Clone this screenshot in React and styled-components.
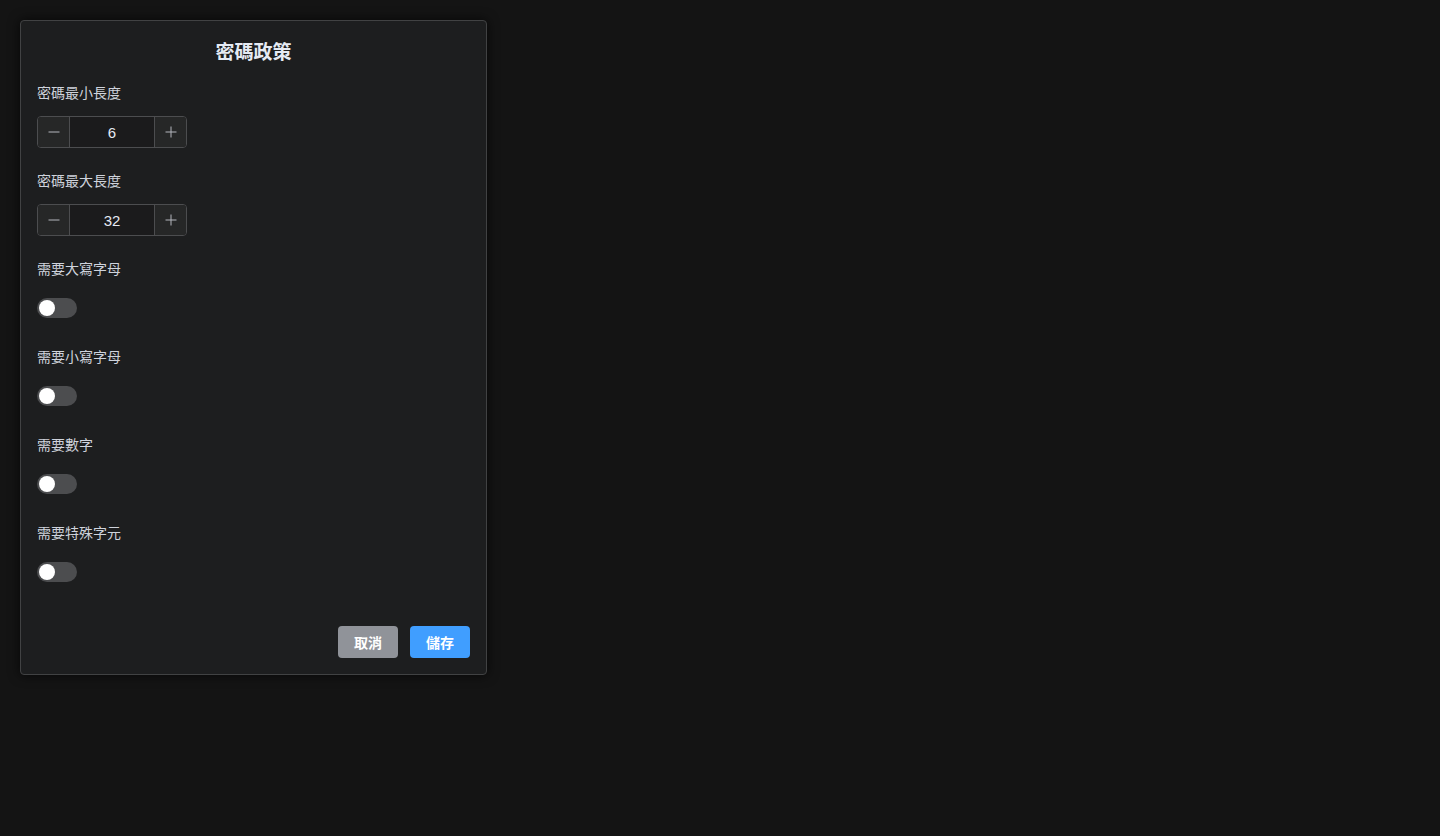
import { useState } from "react";
import styled, { createGlobalStyle } from "styled-components";

const GlobalStyle = createGlobalStyle`
  html, body {
    margin: 0;
    padding: 0;
    background: #141414;
    font-family: "Liberation Sans", "Noto Sans CJK TC", sans-serif;
  }
`;

const Page = styled.div`
  min-height: 100vh;
  padding: 20px;
  box-sizing: border-box;
`;

const Dialog = styled.div`
  width: 467px;
  box-sizing: border-box;
  background: #1d1e1f;
  border: 1px solid #414243;
  border-radius: 4px;
  box-shadow: 0 0 12px rgba(0, 0, 0, 0.72);
  padding: 17px 16px 16px;
`;

const Title = styled.div`
  height: 30px;
  line-height: 30px;
  text-align: center;
  font-size: 19px;
  font-weight: 700;
  color: #e5eaf3;
  margin-bottom: 14px;
`;

const FormItem = styled.div`
  margin-bottom: 22px;
`;

const Label = styled.div`
  font-size: 14px;
  line-height: 22px;
  color: #cfd3dc;
  margin-bottom: 12px;
`;

const Content = styled.div`
  height: 32px;
  display: flex;
  align-items: center;
`;

const Stepper = styled.div`
  width: 150px;
  height: 32px;
  box-sizing: border-box;
  display: flex;
  border: 1px solid #4c4d4f;
  border-radius: 4px;
  background: #1b1b1c;
  overflow: hidden;
`;

const StepButton = styled.button`
  width: 32px;
  flex: none;
  border: none;
  padding: 0;
  background: #262727;
  color: #b4b7be;
  display: flex;
  align-items: center;
  justify-content: center;
  border-${(p) => (p.$side === "left" ? "right" : "left")}: 1px solid #4c4d4f;
  cursor: pointer;
`;

const Value = styled.div`
  flex: 1;
  display: flex;
  align-items: center;
  justify-content: center;
  font-size: 15px;
  color: #e5eaf3;
`;

const Track = styled.div`
  width: 40px;
  height: 20px;
  border-radius: 10px;
  background: ${(p) => (p.$on ? "#409eff" : "#4c4d4f")};
  position: relative;
  cursor: pointer;
`;

const Knob = styled.span`
  position: absolute;
  top: 2px;
  left: ${(p) => (p.$on ? "22px" : "2px")};
  width: 16px;
  height: 16px;
  border-radius: 50%;
  background: #fff;
`;

const Footer = styled.div`
  display: flex;
  justify-content: flex-end;
  gap: 12px;
  padding-top: 16px;
`;

const Button = styled.button`
  width: 60px;
  height: 32px;
  border: none;
  border-radius: 4px;
  font-family: inherit;
  font-size: 14px;
  font-weight: 700;
  color: #fff;
  background: ${(p) => (p.$primary ? "#409eff" : "#909399")};
  cursor: pointer;
`;

const Minus = () => (
  <svg width="14" height="14" viewBox="0 0 14 14">
    <path d="M1.5 7h11" stroke="currentColor" strokeWidth="1" />
  </svg>
);

const Plus = () => (
  <svg width="14" height="14" viewBox="0 0 14 14">
    <path d="M1.5 7h11M7 1.5v11" stroke="currentColor" strokeWidth="1" />
  </svg>
);

function NumberInput({ value, onChange }) {
  return (
    <Stepper>
      <StepButton $side="left" onClick={() => onChange(value - 1)}>
        <Minus />
      </StepButton>
      <Value>{value}</Value>
      <StepButton $side="right" onClick={() => onChange(value + 1)}>
        <Plus />
      </StepButton>
    </Stepper>
  );
}

function Switch({ on, onToggle }) {
  return (
    <Track $on={on} onClick={onToggle}>
      <Knob $on={on} />
    </Track>
  );
}

export default function App() {
  const [minLen, setMinLen] = useState(6);
  const [maxLen, setMaxLen] = useState(32);
  const [flags, setFlags] = useState({ upper: false, lower: false, digit: false, special: false });

  const toggles = [
    ["upper", "需要大寫字母"],
    ["lower", "需要小寫字母"],
    ["digit", "需要數字"],
    ["special", "需要特殊字元"],
  ];

  return (
    <Page>
      <GlobalStyle />
      <Dialog>
        <Title>密碼政策</Title>
        <FormItem>
          <Label>密碼最小長度</Label>
          <Content>
            <NumberInput value={minLen} onChange={setMinLen} />
          </Content>
        </FormItem>
        <FormItem>
          <Label>密碼最大長度</Label>
          <Content>
            <NumberInput value={maxLen} onChange={setMaxLen} />
          </Content>
        </FormItem>
        {toggles.map(([key, label]) => (
          <FormItem key={key}>
            <Label>{label}</Label>
            <Content>
              <Switch on={flags[key]} onToggle={() => setFlags({ ...flags, [key]: !flags[key] })} />
            </Content>
          </FormItem>
        ))}
        <Footer>
          <Button>取消</Button>
          <Button $primary>儲存</Button>
        </Footer>
      </Dialog>
    </Page>
  );
}
